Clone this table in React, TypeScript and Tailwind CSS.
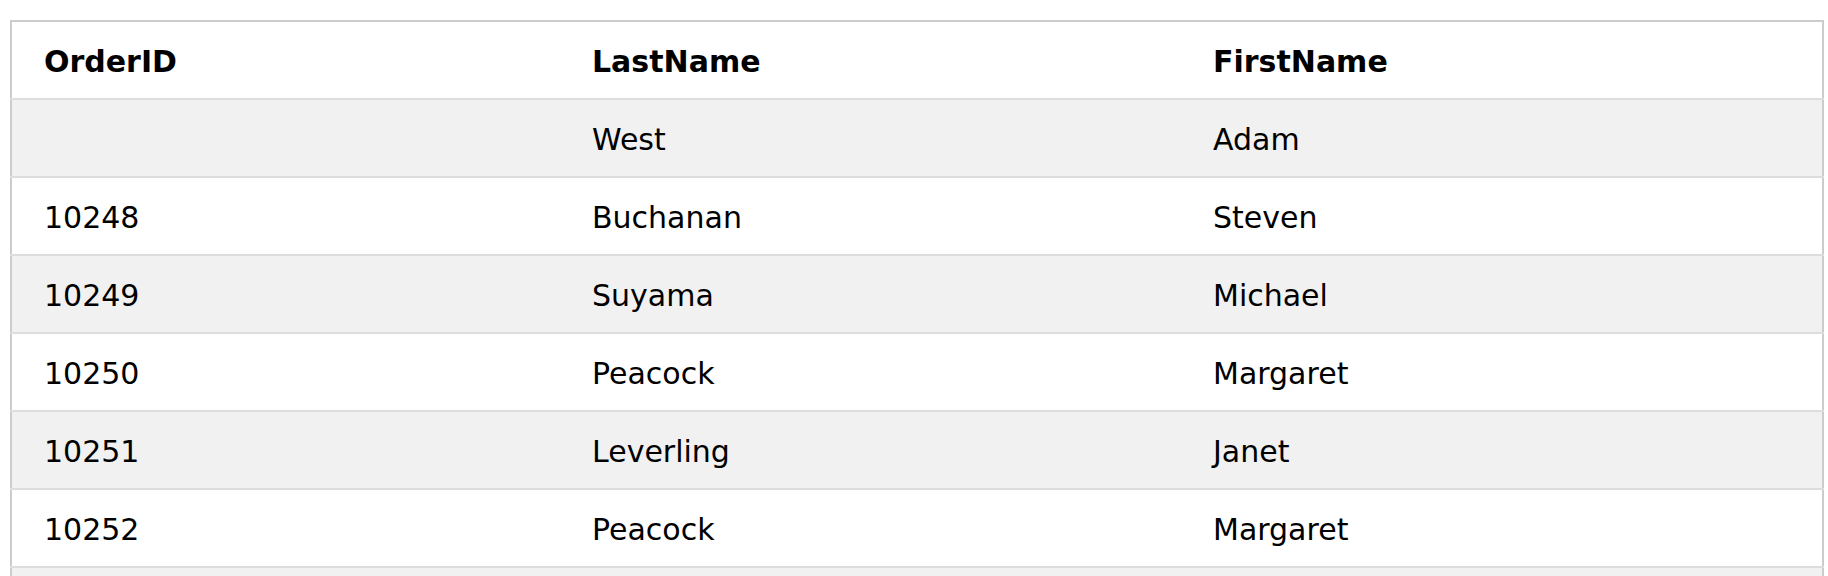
import React from "react";

const rows = [
  { id: "", last: "West", first: "Adam" },
  { id: "10248", last: "Buchanan", first: "Steven" },
  { id: "10249", last: "Suyama", first: "Michael" },
  { id: "10250", last: "Peacock", first: "Margaret" },
  { id: "10251", last: "Leverling", first: "Janet" },
  { id: "10252", last: "Peacock", first: "Margaret" },
  { id: "", last: "", first: "" },
];

function App() {
  return (
    <div className="h-[576px] w-[1828px] overflow-hidden bg-white pl-[10px] pt-[20px]">
      <table
        className="w-[1814px] table-fixed border-collapse border-2 border-[#cccccc] text-[30px] text-black"
        style={{ fontFamily: '"DejaVu Sans", Verdana, sans-serif' }}
      >
        <colgroup>
          <col className="w-[565px]" />
          <col className="w-[621px]" />
          <col />
        </colgroup>
        <thead>
          <tr className="h-[78px] border-b-2 border-[#dddddd] bg-white">
            <th className="pl-[32px] pr-[16px] pt-[2px] text-left font-bold">OrderID</th>
            <th className="px-[16px] pt-[2px] text-left font-bold">LastName</th>
            <th className="px-[16px] pt-[2px] text-left font-bold">FirstName</th>
          </tr>
        </thead>
        <tbody>
          {rows.map((r, i) => (
            <tr
              key={i}
              className={
                i % 2 === 0
                  ? "h-[78px] border-b-2 border-[#dddddd] bg-[#f1f1f1]"
                  : "h-[78px] border-b-2 border-[#dddddd] bg-white"
              }
            >
              <td className="pl-[32px] pr-[16px] pt-[2px]">{r.id}</td>
              <td className="px-[16px] pt-[2px]">{r.last}</td>
              <td className="px-[16px] pt-[2px]">{r.first}</td>
            </tr>
          ))}
        </tbody>
      </table>
    </div>
  );
}

export default App;
